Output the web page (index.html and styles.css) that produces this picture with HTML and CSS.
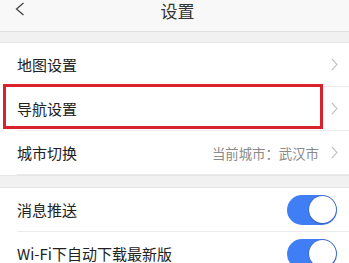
FILE: index.html
```html
<!DOCTYPE html>
<html lang="zh-CN">
<head>
<meta charset="utf-8">
<link rel="stylesheet" href="styles.css">
</head>
<body>
<header class="header">
  <div class="back">
    <svg width="10" height="14" viewBox="0 0 10 14"><polyline points="8.5,1 1.5,7 8.5,13" fill="none" stroke="#444" stroke-width="1.3"/></svg>
  </div>
  <div class="title">设置</div>
  <div></div>
</header>
<section class="group first">
  <div class="row"><div class="row-inner"><span class="label">地图设置</span><span class="chev"><svg width="7" height="13" viewBox="0 0 7 13"><polyline points="0.8,0.8 6,6.5 0.8,12.2" fill="none" stroke="#bdbdbd" stroke-width="1.1"/></svg></span></div></div>
  <div class="row"><div class="row-inner"><span class="label">导航设置</span><span class="chev"><svg width="7" height="13" viewBox="0 0 7 13"><polyline points="0.8,0.8 6,6.5 0.8,12.2" fill="none" stroke="#bdbdbd" stroke-width="1.1"/></svg></span></div></div>
  <div class="row"><div class="row-inner"><span class="label">城市切换</span><span class="value">当前城市：武汉市</span><span class="chev"><svg width="7" height="13" viewBox="0 0 7 13"><polyline points="0.8,0.8 6,6.5 0.8,12.2" fill="none" stroke="#bdbdbd" stroke-width="1.1"/></svg></span></div></div>
  <div class="highlight"></div>
</section>
<section class="group">
  <div class="row"><div class="row-inner switch-row"><span class="label">消息推送</span><span class="toggle"><span class="knob"></span></span></div></div>
  <div class="row"><div class="row-inner switch-row"><span class="label">Wi-Fi下自动下载最新版</span><span class="toggle"><span class="knob"></span></span></div></div>
</section>
</body>
</html>
```
FILE: styles.css
```css
html, body {
  margin: 0;
  padding: 0;
}
body {
  background: #f1f1f1;
  font-family: "Noto Sans CJK SC", "Noto Sans", sans-serif;
  color: #222;
  width: 349px;
  height: 263px;
  overflow: hidden;
}
.header {
  height: 31px;
  background: #f8f8f8;
  border-bottom: 1px solid #dedede;
  display: grid;
  grid-template-columns: 1fr auto 1fr;
  align-items: start;
  padding-left: 6px;
}
.back {
  padding-top: 2px;
  padding-left: 9px;
  line-height: 0;
}
.title {
  font-size: 17px;
  line-height: 20px;
  color: #333;
  padding-top: 1px;
}
.group {
  background: #fff;
  margin-top: 10px;
  border-top: 1px solid #e6e6e6;
  border-bottom: 1px solid #e6e6e6;
  position: relative;
}
.group + .group {
  margin-top: 11px;
}
.row {
  padding-left: 17px;
}
.row-inner {
  height: 43px;
  display: flex;
  align-items: center;
  padding-right: 11px;
  border-bottom: 1px solid #ebebeb;
}
.row:last-of-type .row-inner {
  border-bottom: none;
}
.label {
  font-size: 15px;
  flex: 1;
  white-space: nowrap;
}
.value {
  font-size: 13.4px;
  color: #8a8a8a;
  margin-right: 12px;
}
.chev {
  line-height: 0;
}
.switch-row {
  padding-right: 12px;
}
.toggle {
  width: 50px;
  height: 30px;
  border-radius: 15px;
  background: #3f7ef5;
  display: flex;
  align-items: center;
  justify-content: flex-end;
  padding-right: 1px;
  box-sizing: border-box;
}
.knob {
  width: 27px;
  height: 27px;
  border-radius: 50%;
  background: #fff;
  box-shadow: 0 0 0 0.5px #3b5fc0, 0 1px 2px rgba(0,0,0,0.25);
}
.highlight {
  position: absolute;
  left: 3px;
  top: 41px;
  width: 320px;
  height: 45px;
  box-sizing: border-box;
  border: 3px solid #d8232c;
}
```
